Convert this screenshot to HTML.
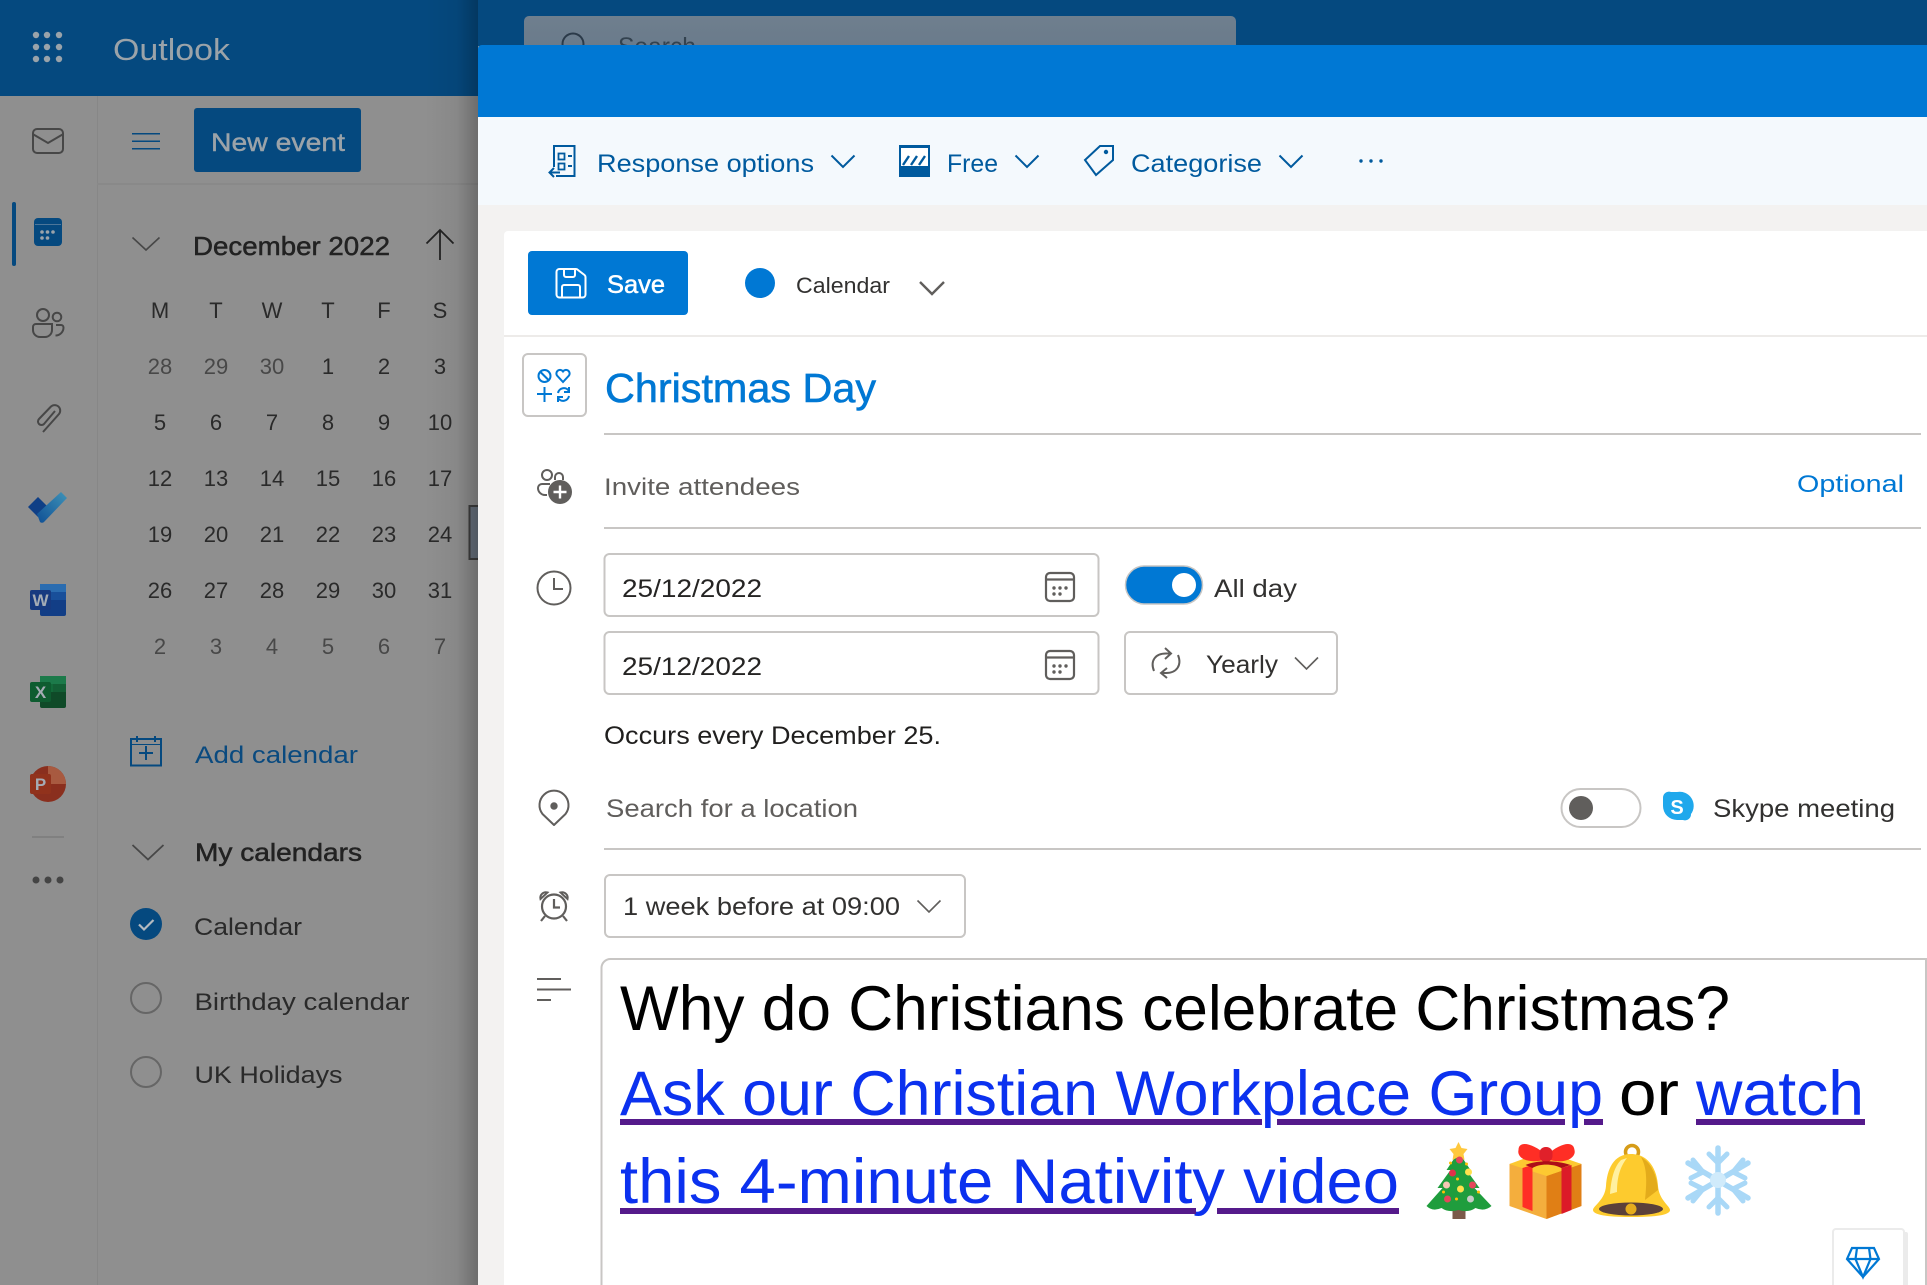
<!DOCTYPE html>
<html lang="en"><head><meta charset="utf-8"><title>Outlook</title>
<style>
html,body{margin:0;padding:0;width:1927px;height:1285px;overflow:hidden;background:#8f8f8f}
svg{display:block}
text{font-family:"Liberation Sans",sans-serif}
</style></head><body>
<svg width="1927" height="1285" viewBox="0 0 1927 1285" xmlns="http://www.w3.org/2000/svg">
<defs>
<linearGradient id="sh" x1="0" x2="1" y1="0" y2="0"><stop offset="0" stop-color="#000" stop-opacity="0"/><stop offset=".6" stop-color="#000" stop-opacity=".05"/><stop offset="1" stop-color="#000" stop-opacity=".24"/></linearGradient>
<linearGradient id="sb" x1="0" x2="0" y1="0" y2="1"><stop offset="0" stop-color="#6f7f8e"/><stop offset="1" stop-color="#68798a"/></linearGradient>
<linearGradient id="td" x1="0" x2="1" y1="1" y2="0"><stop offset="0" stop-color="#0f4f95"/><stop offset="1" stop-color="#3f93b8"/></linearGradient>
</defs>
<rect width="1927" height="1285" fill="#8f8f8f"/>
<rect width="478" height="96" fill="#05497f"/>
<rect x="478" width="1449" height="46" fill="#05497f"/>
<rect x="97" y="96" width="1" height="1189" fill="#878787"/>
<rect x="97" y="183" width="381" height="2" fill="#898989"/>
<!-- waffle -->
<g fill="#9aa3aa"><circle cx="36" cy="35" r="3.200"/><circle cx="47" cy="35" r="3.200"/><circle cx="59" cy="35" r="3.200"/><circle cx="36" cy="47" r="3.200"/><circle cx="47" cy="47" r="3.200"/><circle cx="59" cy="47" r="3.200"/><circle cx="36" cy="59" r="3.200"/><circle cx="47" cy="59" r="3.200"/><circle cx="59" cy="59" r="3.200"/></g>
<text x="113" y="60" font-size="31" fill="#9ba3a9" textLength="117" lengthAdjust="spacingAndGlyphs">Outlook</text>
<!-- search -->
<rect x="524" y="16" width="712" height="40" rx="5" fill="url(#sb)"/>
<circle cx="573" cy="44" r="10.500" fill="none" stroke="#2b3a49" stroke-width="2"/>
<text x="618" y="55" font-size="25" fill="#33424f" textLength="78" lengthAdjust="spacingAndGlyphs">Search</text>
<!-- rail -->
<g fill="none" stroke="#474747" stroke-width="2">
<rect x="33" y="129" width="30" height="24" rx="4"/><path d="M33.500 134.500L48 143L62.500 134.500"/>
<circle cx="43" cy="315" r="6"/><circle cx="57" cy="317" r="4.300"/>
<path d="M36 324H52V330a7 7 0 0 1-7 7H40a7 7 0 0 1-7-7V327a3 3 0 0 1 3-3z"/><path d="M56 325h5a2.500 2.500 0 0 1 2.500 2.500a8 8 0 0 1-8 8"/>
<path d="M43 432L59 414a5.500 5.500 0 0 0-8-7.500L39 419a3.500 3.500 0 0 0 5 5L55 411"/>
</g>
<rect x="12" y="202" width="4" height="64" rx="2" fill="#05497f"/>
<rect x="34" y="218" width="28" height="28" rx="4" fill="#05497f"/>
<rect x="35" y="224" width="26" height="1" fill="#4c7699"/>
<g fill="#9aa3aa"><circle cx="42" cy="232" r="1.800"/><circle cx="47.500" cy="232" r="1.800"/><circle cx="53" cy="232" r="1.800"/><circle cx="42" cy="238" r="1.800"/><circle cx="47.500" cy="238" r="1.800"/></g>
<rect x="132" y="133" width="28" height="1.500" fill="#05497f"/><rect x="132" y="140.500" width="28" height="1.500" fill="#05497f"/><rect x="132" y="148" width="28" height="1.500" fill="#05497f"/>
<rect x="194" y="108" width="167" height="64" rx="3" fill="#05497f"/>
<text x="211" y="151" font-size="25" fill="#9ba3a9" stroke="#9ba3a9" stroke-width=".4" textLength="134" lengthAdjust="spacingAndGlyphs">New event</text>
<path d="M132.500 237.500L146 250L159.500 237.500" fill="none" stroke="#474747" stroke-width="1.600"/>
<text x="193" y="255" font-size="26" fill="#222" stroke="#222" stroke-width=".5" textLength="197" lengthAdjust="spacingAndGlyphs">December 2022</text>
<path d="M440 260V230M426.500 243.500L440 230L453.500 243.500" fill="none" stroke="#222" stroke-width="1.800"/>
<g font-size="22" fill="#2a2a2a" text-anchor="middle">
<g><text x="160" y="318">M</text><text x="216" y="318">T</text><text x="272" y="318">W</text><text x="328" y="318">T</text><text x="384" y="318">F</text><text x="440" y="318">S</text></g>
<g fill="#484848"><text x="160" y="374">28</text><text x="216" y="374">29</text><text x="272" y="374">30</text></g>
<text x="328" y="374">1</text><text x="384" y="374">2</text><text x="440" y="374">3</text>
<text x="160" y="430">5</text><text x="216" y="430">6</text><text x="272" y="430">7</text><text x="328" y="430">8</text><text x="384" y="430">9</text><text x="440" y="430">10</text>
<text x="160" y="486">12</text><text x="216" y="486">13</text><text x="272" y="486">14</text><text x="328" y="486">15</text><text x="384" y="486">16</text><text x="440" y="486">17</text>
<text x="160" y="542">19</text><text x="216" y="542">20</text><text x="272" y="542">21</text><text x="328" y="542">22</text><text x="384" y="542">23</text><text x="440" y="542">24</text>
<text x="160" y="598">26</text><text x="216" y="598">27</text><text x="272" y="598">28</text><text x="328" y="598">29</text><text x="384" y="598">30</text><text x="440" y="598">31</text>
<g fill="#484848"><text x="160" y="654">2</text><text x="216" y="654">3</text><text x="272" y="654">4</text><text x="328" y="654">5</text><text x="384" y="654">6</text><text x="440" y="654">7</text></g>
</g>
<path d="M479 506H469.500V559H479" fill="#6a7480" stroke="#3f3f3f" stroke-width="2"/>
<!-- todo -->
<path d="M28 507L38 497L48 507L38 517z" fill="#0f3f86"/><path d="M37 514L61 492L67 498L44 522a3 3 0 0 1-4 0z" fill="url(#td)"/>
<!-- word -->
<rect x="40" y="584" width="26" height="32" rx="2" fill="#123e86"/><rect x="40" y="584" width="26" height="8" fill="#2a6cb0"/><rect x="40" y="592" width="26" height="8" fill="#184f9a"/>
<rect x="30" y="590" width="21" height="20" rx="2" fill="#173a80"/><text x="40.500" y="606" font-size="17" font-weight="700" fill="#a5acb5" text-anchor="middle">W</text>
<!-- excel -->
<rect x="40" y="676" width="26" height="32" rx="2" fill="#0f4a28"/><rect x="40" y="676" width="26" height="8" fill="#1c7a4a"/><rect x="53" y="684" width="13" height="8" fill="#135f35"/><rect x="40" y="684" width="13" height="8" fill="#136a3a"/>
<rect x="30" y="682" width="21" height="20" rx="2" fill="#0e5c30"/><text x="40.500" y="698" font-size="17" font-weight="700" fill="#a5acb5" text-anchor="middle">X</text>
<!-- ppt -->
<circle cx="48" cy="784" r="18" fill="#8a2f1e"/><path d="M48 766a18 18 0 0 1 18 18H48z" fill="#a85a40"/>
<rect x="30" y="774" width="21" height="20" rx="2" fill="#91321c"/><text x="40.500" y="790" font-size="17" font-weight="700" fill="#a5acb5" text-anchor="middle">P</text>
<rect x="32" y="836" width="32" height="2" fill="#808080"/>
<circle cx="36" cy="880" r="3.500" fill="#444"/><circle cx="48" cy="880" r="3.500" fill="#444"/><circle cx="60" cy="880" r="3.500" fill="#444"/>
<!-- add calendar -->
<g fill="none" stroke="#05497f" stroke-width="2"><rect x="131" y="739" width="30" height="26.500"/><path d="M137 736v6M155 736v6M146 746v14M139 753h14"/><path d="M131 744.500h30" stroke-width="1"/></g>
<text x="195" y="763" font-size="24.500" fill="#0a4a7f" textLength="163" lengthAdjust="spacingAndGlyphs">Add calendar</text>
<path d="M132.500 845L148 859.500L163.500 845" fill="none" stroke="#474747" stroke-width="1.800"/>
<text x="195" y="861" font-size="25" fill="#222" stroke="#222" stroke-width=".5" textLength="167" lengthAdjust="spacingAndGlyphs">My calendars</text>
<circle cx="146" cy="924" r="16" fill="#05497f"/><path d="M139 924.500L144 929.500L153.500 920" fill="none" stroke="#b4bac0" stroke-width="2.200"/>
<text x="194" y="935" font-size="24.500" fill="#2a2a2a" textLength="108" lengthAdjust="spacingAndGlyphs">Calendar</text>
<circle cx="146" cy="998" r="15" fill="none" stroke="#666" stroke-width="2"/>
<text x="194.500" y="1010" font-size="24.500" fill="#2a2a2a" textLength="215" lengthAdjust="spacingAndGlyphs">Birthday calendar</text>
<circle cx="146" cy="1072" r="15" fill="none" stroke="#666" stroke-width="2"/>
<text x="194.500" y="1083" font-size="24.500" fill="#2a2a2a" textLength="148" lengthAdjust="spacingAndGlyphs">UK Holidays</text>
<rect x="425" y="0" width="53" height="1285" fill="url(#sh)"/>

<!-- modal -->
<path d="M478 49a4 4 0 0 1 4-4H1927V117H478z" fill="#0078d4"/>
<rect x="478" y="117" width="1449" height="88" fill="#f4f9fd"/>
<rect x="478" y="205" width="1449" height="1080" fill="#f3f2f1"/>
<path d="M504 235a4 4 0 0 1 4-4H1927V1285H504z" fill="#fff"/>
<rect x="504" y="335" width="1423" height="2" fill="#edebe9"/>
<!-- ribbon -->
<g fill="none" stroke="#005a9e" stroke-width="2">
<path d="M554 167V146H574.500V176H556"/><rect x="558.500" y="153.500" width="6" height="6" stroke-width="1.800"/><rect x="558.500" y="163.500" width="6" height="6" stroke-width="1.800"/><path d="M568 156h4M568 166h4M560 172.500H549.500M554 168L549.500 172.500L554 177"/>
<path d="M831.500 155.500L843 167L854.500 155.500M1015.500 155.500L1027 167L1038.500 155.500M1279.500 155.500L1291 167L1302.500 155.500"/>
<path d="M1113 146V160L1096 175L1085 160L1100 146z"/>
</g>
<circle cx="1106" cy="152" r="2.200" fill="#005a9e"/>
<text x="597" y="172" font-size="25" fill="#005a9e" textLength="217" lengthAdjust="spacingAndGlyphs">Response options</text>
<rect x="899" y="145" width="31" height="32" fill="#005a9e"/>
<rect x="901" y="148" width="27" height="18" fill="#fff"/>
<path d="M903 165l6-9M911 165l6-9M919 165l6-9" stroke="#005a9e" stroke-width="2.400"/>
<text x="947" y="172" font-size="25" fill="#005a9e" textLength="51" lengthAdjust="spacingAndGlyphs">Free</text>
<text x="1131" y="172" font-size="25" fill="#005a9e" textLength="131" lengthAdjust="spacingAndGlyphs">Categorise</text>
<circle cx="1361" cy="161" r="1.700" fill="#005a9e"/><circle cx="1371" cy="161" r="1.700" fill="#005a9e"/><circle cx="1381" cy="161" r="1.700" fill="#005a9e"/>
<!-- save -->
<rect x="528" y="251" width="160" height="64" rx="4" fill="#0078d4"/>
<g fill="none" stroke="#fff" stroke-width="2"><path d="M559.500 269a3 3 0 0 0-3 3V294.500a3 3 0 0 0 3 3H582.500a3 3 0 0 0 3-3V277a3 3 0 0 0-1-2L578 270a3 3 0 0 0-2-1z"/><path d="M564 269v6a2 2 0 0 0 2 2h7a2 2 0 0 0 2-2v-6M562 297v-10a2 2 0 0 1 2-2h14a2 2 0 0 1 2 2v10"/></g>
<text x="607" y="293" font-size="25" fill="#fff" stroke="#fff" stroke-width=".5" textLength="58" lengthAdjust="spacingAndGlyphs">Save</text>
<circle cx="760" cy="283" r="15" fill="#0078d4"/>
<text x="796" y="293" font-size="22" fill="#323130" textLength="94" lengthAdjust="spacingAndGlyphs">Calendar</text>
<path d="M920 282L932 294L944 282" fill="none" stroke="#605e5c" stroke-width="2.400"/>
<!-- title -->
<rect x="523" y="354" width="63" height="62" rx="5" fill="#fff" stroke="#c8c6c4" stroke-width="2"/>
<g fill="none" stroke="#0078d4" stroke-width="2"><circle cx="544.500" cy="376" r="6"/><path d="M540.500 372L548.500 380"/><path d="M563 382l-6-6.500a3.500 3.500 0 0 1 6-4a3.500 3.500 0 0 1 6 4z"/><path d="M537 394h15M544.500 387v15"/><path d="M558 393a6 6 0 0 1 11-2M569 387v5h-5M569 396a6 6 0 0 1-11 2M558 402v-5h5"/></g>
<text x="605" y="402" font-size="41" fill="#0078d4" stroke="#0078d4" stroke-width=".6" textLength="271" lengthAdjust="spacingAndGlyphs">Christmas Day</text>
<rect x="604" y="433" width="1317" height="2" fill="#c8c6c4"/>
<!-- invite -->
<g fill="none" stroke="#605e5c" stroke-width="2"><circle cx="547" cy="475" r="5"/><path d="M555 480v-3a4 4 0 0 1 8 0v3M550 484h-8a4 4 0 0 0-4 4a7 7 0 0 0 7 7h2"/></g>
<circle cx="560" cy="492" r="12" fill="#605e5c"/><path d="M560 485.500v13M553.500 492h13" stroke="#fff" stroke-width="2.400"/>
<text x="604" y="495" font-size="24.500" fill="#605e5c" textLength="196" lengthAdjust="spacingAndGlyphs">Invite attendees</text>
<text x="1797" y="492" font-size="24.500" fill="#0078d4" textLength="107" lengthAdjust="spacingAndGlyphs">Optional</text>
<rect x="604" y="527" width="1317" height="2" fill="#c8c6c4"/>
<!-- dates -->
<circle cx="554" cy="588" r="16.500" fill="none" stroke="#605e5c" stroke-width="2"/><path d="M554 578V589H563" fill="none" stroke="#605e5c" stroke-width="2"/>
<rect x="604.500" y="554" width="494" height="62" rx="5" fill="#fff" stroke="#c8c6c4" stroke-width="2"/>
<rect x="604.500" y="632" width="494" height="62" rx="5" fill="#fff" stroke="#c8c6c4" stroke-width="2"/>
<text x="622" y="597" font-size="25" fill="#252423" textLength="140" lengthAdjust="spacingAndGlyphs">25/12/2022</text>
<text x="622" y="675" font-size="25" fill="#252423" textLength="140" lengthAdjust="spacingAndGlyphs">25/12/2022</text>
<g><rect x="1046" y="573" width="28" height="28" rx="4" fill="none" stroke="#605e5c" stroke-width="2.200"/><path d="M1046 579.500h28" stroke="#605e5c" stroke-width="2.200"/><g fill="#605e5c"><circle cx="1054" cy="588" r="1.700"/><circle cx="1060" cy="588" r="1.700"/><circle cx="1066" cy="588" r="1.700"/><circle cx="1054" cy="594" r="1.700"/><circle cx="1060" cy="594" r="1.700"/></g></g>
<g><rect x="1046" y="651" width="28" height="28" rx="4" fill="none" stroke="#605e5c" stroke-width="2.200"/><path d="M1046 657.500h28" stroke="#605e5c" stroke-width="2.200"/><g fill="#605e5c"><circle cx="1054" cy="666" r="1.700"/><circle cx="1060" cy="666" r="1.700"/><circle cx="1066" cy="666" r="1.700"/><circle cx="1054" cy="672" r="1.700"/><circle cx="1060" cy="672" r="1.700"/></g></g>
<rect x="1125.500" y="566" width="77" height="38" rx="19" fill="#0078d4" stroke="#c8c6c4" stroke-width="1.500"/><circle cx="1184" cy="585" r="12" fill="#fff"/>
<text x="1214" y="597" font-size="25" fill="#323130" textLength="83" lengthAdjust="spacingAndGlyphs">All day</text>
<rect x="1125" y="632" width="212" height="62" rx="5" fill="#fff" stroke="#c8c6c4" stroke-width="2"/>
<g fill="none" stroke="#605e5c" stroke-width="2"><path d="M1154 671C1150 661 1155 653.500 1166 653.500H1171M1165 648L1171 653.500L1165 659"/><path d="M1178 655C1182 665 1177 673 1166 673H1161M1167 668L1161 673L1167 678"/></g>
<text x="1206" y="673" font-size="25" fill="#323130" textLength="72" lengthAdjust="spacingAndGlyphs">Yearly</text>
<path d="M1295 657.500L1306.500 669L1318 657.500" fill="none" stroke="#605e5c" stroke-width="1.600"/>
<text x="604" y="744" font-size="25" fill="#201f1e" textLength="337" lengthAdjust="spacingAndGlyphs">Occurs every December 25.</text>
<!-- location -->
<path d="M554 825L542.500 814a14.500 14.500 0 1 1 23 0z" fill="none" stroke="#605e5c" stroke-width="2" stroke-linejoin="round"/><circle cx="554" cy="806" r="3.700" fill="#605e5c"/>
<text x="606" y="817" font-size="25" fill="#605e5c" textLength="252" lengthAdjust="spacingAndGlyphs">Search for a location</text>
<rect x="1561.500" y="789" width="79" height="38" rx="19" fill="#fff" stroke="#c8c6c4" stroke-width="2"/><circle cx="1581" cy="808" r="12" fill="#605e5c"/>
<path d="M1663 798a6 6 0 0 1 8-6h6a14 14 0 0 1 14 22a6 6 0 0 1-8 6h-6a14 14 0 0 1-14-14z" fill="#1fa8ec"/>
<text x="1677" y="814" font-size="20" font-weight="700" fill="#fff" text-anchor="middle">S</text>
<text x="1713" y="817" font-size="25" fill="#323130" textLength="182" lengthAdjust="spacingAndGlyphs">Skype meeting</text>
<rect x="604" y="848" width="1317" height="2" fill="#c8c6c4"/>
<!-- reminder -->
<circle cx="554" cy="906.500" r="12" fill="none" stroke="#605e5c" stroke-width="2.200"/><path d="M554 899V907.500H560M545 916L541 921M563 916L567 921" fill="none" stroke="#605e5c" stroke-width="2.200"/><path d="M540.500 899a5.500 5.500 0 0 1 7-6.500zM567.500 899a5.500 5.500 0 0 0-7-6.500z" fill="none" stroke="#605e5c" stroke-width="2"/>
<rect x="605" y="875" width="360" height="62" rx="5" fill="#fff" stroke="#c8c6c4" stroke-width="2"/>
<text x="623" y="915" font-size="25" fill="#323130" textLength="277" lengthAdjust="spacingAndGlyphs">1 week before at 09:00</text>
<path d="M917.500 900.500L929 912L940.500 900.500" fill="none" stroke="#605e5c" stroke-width="1.600"/>
<!-- body -->
<rect x="537" y="978" width="24" height="2" fill="#605e5c"/><rect x="537" y="988.500" width="34" height="2" fill="#605e5c"/><rect x="537" y="999" width="14" height="2" fill="#605e5c"/>
<path d="M601.500 1285V968a9 9 0 0 1 9-9H1926V1285" fill="#fff" stroke="#c8c6c4" stroke-width="2"/>
<text x="620" y="1030" font-size="63" fill="#000" textLength="1110" lengthAdjust="spacingAndGlyphs">Why do Christians celebrate Christmas?</text>
<text x="620" y="1115" font-size="63" fill="#0b31ef" textLength="983" lengthAdjust="spacingAndGlyphs">Ask our Christian Workplace Group</text>
<text x="1619" y="1115" font-size="63" fill="#000" textLength="60" lengthAdjust="spacingAndGlyphs">or</text>
<text x="1696" y="1115" font-size="63" fill="#0b31ef" textLength="168" lengthAdjust="spacingAndGlyphs">watch</text>
<text x="620" y="1203" font-size="63" fill="#0b31ef" textLength="779" lengthAdjust="spacingAndGlyphs">this 4-minute Nativity video</text>
<g fill="#551a8b">
<rect x="620" y="1119" width="642" height="6"/><rect x="1277" y="1119" width="288" height="6"/><rect x="1584" y="1119" width="19" height="6"/>
<rect x="1696" y="1119" width="169" height="6"/>
<rect x="620" y="1208" width="576" height="6"/><rect x="1217" y="1208" width="182" height="6"/>
</g>
<!-- tree -->
<g transform="translate(-1.500 0)">
<rect x="1454" y="1205" width="13" height="14" fill="#7b5a4a"/>
<path d="M1460 1152L1472 1170L1468 1170L1481 1188L1476 1188L1493 1206Q1486 1212 1477 1208Q1470 1213 1460 1210Q1450 1213 1443 1208Q1434 1212 1428 1206L1444 1188L1439 1188L1452 1170L1448 1170z" fill="#1f9d3d"/>
<path d="M1460 1142l3 6 6 1-4 5 1 6-6-3-6 3 1-6-4-5 6-1z" fill="#ffc83d"/>
<circle cx="1461" cy="1160" r="3.500" fill="#e5475b"/><circle cx="1454" cy="1173" r="3.500" fill="#e0304a"/><circle cx="1470" cy="1172" r="3.500" fill="#ffe14d"/><circle cx="1448" cy="1185" r="3.500" fill="#f7c7b5"/><circle cx="1474" cy="1185" r="3.500" fill="#e5475b"/><circle cx="1462" cy="1189" r="3.500" fill="#ffe14d"/><circle cx="1449" cy="1199" r="3.500" fill="#e5475b"/><circle cx="1472" cy="1199" r="3.500" fill="#c8ccc8"/>
<g fill="#ffc107"><circle cx="1452" cy="1163" r="1.500"/><circle cx="1468" cy="1164" r="1.500"/><circle cx="1459" cy="1179" r="1.500"/><circle cx="1445" cy="1192" r="1.500"/><circle cx="1480" cy="1192" r="1.500"/><circle cx="1458" cy="1199" r="1.500"/></g>
</g>
<!-- gift -->
<g transform="translate(-1.500 0)">
<path d="M1511 1164L1548 1154L1583 1164V1206L1548 1219L1511 1206z" fill="#f4ae3d"/>
<path d="M1548 1176L1583 1164V1206L1548 1219z" fill="#e07f15"/>
<path d="M1511 1164L1546 1151L1583 1164L1548 1176z" fill="#fdc931"/>
<path d="M1524 1168l10-3V1211l-10-4z" fill="#ff2e25"/>
<path d="M1563 1168l10-3V1210l-10 4z" fill="#dc1b28"/>
<path d="M1548 1159C1530 1165 1518 1158 1520 1150C1520 1140 1534 1143 1548 1155C1562 1143 1575 1140 1576 1150C1578 1158 1566 1165 1548 1159z" fill="#ff2e25"/>
<rect x="1541" y="1147" width="13" height="15" rx="6" fill="#e0202a"/>
<path d="M1527 1165C1538 1160 1558 1160 1572 1165L1563 1168C1553 1163 1540 1164 1534 1168z" fill="#ad0d18"/>
</g>
<!-- bell -->
<g transform="translate(-3 0)">
<circle cx="1635" cy="1152" r="6.500" fill="none" stroke="#d69c18" stroke-width="3.500"/>
<path d="M1634 1154C1616 1154 1610 1170 1609 1186C1608 1200 1596 1206 1596 1210C1596 1216 1617 1217 1635 1217C1653 1217 1673 1216 1673 1210C1673 1206 1662 1200 1661 1186C1660 1170 1652 1154 1634 1154z" fill="#fdcb2e"/>
<path d="M1644 1157C1656 1164 1660 1178 1661 1190L1648 1200C1650 1180 1650 1168 1644 1157z" fill="#e3ab1b"/>
<path d="M1624 1160C1616 1168 1614 1182 1613 1194L1620 1192C1620 1180 1622 1168 1630 1158z" fill="#fff0a0"/>
<ellipse cx="1634" cy="1209" rx="32" ry="6.500" fill="#5b403a"/>
<circle cx="1634" cy="1209" r="5.500" fill="#e5ac1d"/>
</g>
<!-- snowflake -->
<g transform="translate(-3 0)">
<g fill="none" stroke="#a9d8f7" stroke-width="5.500" stroke-linecap="round">
<path d="M1721 1148V1213M1691 1163L1751 1198M1751 1163L1691 1198"/>
<path d="M1712 1154L1721 1163L1730 1154M1712 1207L1721 1198L1730 1207M1694 1178L1706 1172L1696 1160M1748 1178L1736 1172L1746 1160M1694 1183L1706 1189L1696 1201M1748 1183L1736 1189L1746 1201" stroke-width="5"/>
</g>
<circle cx="1721" cy="1180" r="8" fill="#d0ebfb"/>
</g>
<!-- diamond box -->
<g transform="translate(-4 0)">
<path d="M1908 1232h2a2 2 0 0 1 2 2V1285H1908z" fill="#ebebeb"/>
<path d="M1837 1285V1232a3 3 0 0 1 3-3H1905a3 3 0 0 1 3 3V1285" fill="#fff" stroke="#ebebeb" stroke-width="2"/>
<g fill="none" stroke="#0078d4" stroke-width="2.200"><path d="M1856 1248H1878L1883 1259L1867 1277L1851 1259z"/><path d="M1851 1259H1883M1861 1248L1859.500 1259L1867 1277L1874.500 1259L1873 1248"/></g>
</g>
</svg>
</body></html>
